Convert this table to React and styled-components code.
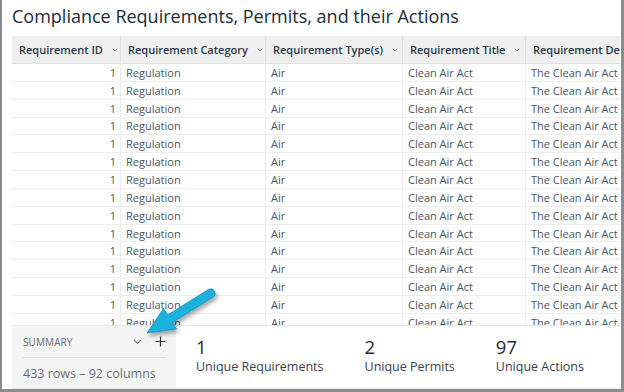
import React from 'react';
import styled, { createGlobalStyle } from 'styled-components';

const GlobalStyle = createGlobalStyle`
  html, body {
    margin: 0;
    padding: 0;
    background: #ffffff;
  }
  body {
    font-family: "Open Sans", "Noto Sans", sans-serif;
  }
`;

const Frame = styled.div`
  position: relative;
  width: 624px;
  height: 392px;
  box-sizing: border-box;
  border-left: 2px solid #8d8d8d;
  border-right: 3px solid #8d8d8d;
  border-bottom: 3px solid #8d8d8d;
  padding-left: 10px;
  padding-right: 1px;
  display: flex;
  flex-direction: column;
  overflow: hidden;
  background: #fff;
`;

const Title = styled.h1`
  margin: 0;
  height: 36px;
  display: flex;
  align-items: center;
  padding-bottom: 4px;
  box-sizing: border-box;
  font-size: 18px;
  font-weight: 400;
  color: #1d2b3a;
  white-space: nowrap;
`;

const TableArea = styled.div`
  flex: 1;
  overflow: hidden;
  min-height: 0;
`;

const cols = '109px 145px 137px 123px 220px';

const HeaderRow = styled.div`
  display: grid;
  grid-template-columns: ${cols};
  height: 28px;
  background: #efefef;
  border-bottom: 1px solid #e2e2e2;
  box-sizing: border-box;
`;

const HeaderCell = styled.div`
  display: flex;
  align-items: center;
  gap: 9px;
  padding-left: 7px;
  font-size: 11px;
  font-weight: 600;
  color: #2b3a4a;
  white-space: nowrap;
  border-right: 1px solid #e0e0e0;
  overflow: hidden;
`;

const Row = styled.div`
  display: grid;
  grid-template-columns: ${cols};
  height: 17.85px;
  box-sizing: border-box;
  border-bottom: 1px solid #ededed;
`;

const Cell = styled.div`
  display: flex;
  align-items: center;
  justify-content: ${p => (p.$num ? 'flex-end' : 'flex-start')};
  padding: ${p => (p.$num ? '0 4px 0 0' : '0 0 0 5px')};
  font-size: 11px;
  color: #4a5664;
  white-space: nowrap;
  overflow: hidden;
  border-right: 1px solid #ececec;
`;

const Summary = styled.div`
  height: 64px;
  display: flex;
  border-top: 1px solid #e6e6e6;
  border-bottom: 1px solid #e9e9e9;
  box-sizing: border-box;
  background: #fff;
`;

const SummaryLeft = styled.div`
  width: 164px;
  background: #f4f4f4;
  padding: 0 10px;
  box-sizing: border-box;
  display: flex;
  flex-direction: column;
`;

const SummaryHead = styled.div`
  height: 32px;
  display: flex;
  align-items: center;
  border-bottom: 1px solid #e2e2e2;
  box-sizing: border-box;
  font-size: 10px;
  color: #6a6f75;
  letter-spacing: 0.1px;
`;

const HeadLabel = styled.span`
  flex: 1;
  padding-left: 1px;
`;

const IconBtn = styled.span`
  display: flex;
  align-items: center;
  justify-content: center;
  margin-left: ${p => p.$ml || 0}px;
  color: ${p => p.$c || '#8a8f95'};
`;

const RowCount = styled.div`
  flex: 1;
  display: flex;
  align-items: center;
  padding-left: 1px;
  font-size: 12.5px;
  color: #6b7076;
  white-space: nowrap;
`;

const Stats = styled.div`
  flex: 1;
  display: flex;
  gap: 41px;
  padding-left: 20px;
`;

const Stat = styled.div`
  display: flex;
  flex-direction: column;
  padding-top: 9px;
`;

const StatValue = styled.div`
  font-size: 18.5px;
  line-height: 24px;
  color: #1f2a36;
`;

const StatLabel = styled.div`
  font-size: 12.5px;
  line-height: 16px;
  color: #38434f;
  white-space: nowrap;
`;

const Pointer = styled.svg`
  position: absolute;
  left: 130px;
  top: 285px;
  pointer-events: none;
  overflow: visible;
`;

const Chevron = ({ size = 6, color = '#8b9096' }) => (
  <svg width={size} height={size * 0.6} viewBox="0 0 10 6" fill="none">
    <path d="M1 1l4 4 4-4" stroke={color} strokeWidth="1.4" />
  </svg>
);

const headers = [
  'Requirement ID',
  'Requirement Category',
  'Requirement Type(s)',
  'Requirement Title',
  'Requirement Description',
];

const rows = Array.from({ length: 16 }, (_, i) => ({
  id: i,
  values: ['1', 'Regulation', 'Air', 'Clean Air Act', 'The Clean Air Act (CAA) is the comprehensive federal law'],
}));

const stats = [
  { value: '1', label: 'Unique Requirements' },
  { value: '2', label: 'Unique Permits' },
  { value: '97', label: 'Unique Actions' },
];

export default function App() {
  return (
    <>
      <GlobalStyle />
      <Frame>
        <Title>Compliance Requirements, Permits, and their Actions</Title>
        <TableArea>
          <HeaderRow>
            {headers.map(h => (
              <HeaderCell key={h}>
                {h}
                <Chevron />
              </HeaderCell>
            ))}
          </HeaderRow>
          {rows.map(r => (
            <Row key={r.id}>
              {r.values.map((v, j) => (
                <Cell key={j} $num={j === 0}>{v}</Cell>
              ))}
            </Row>
          ))}
        </TableArea>
        <Summary>
          <SummaryLeft>
            <SummaryHead>
              <HeadLabel>SUMMARY</HeadLabel>
              <IconBtn><Chevron size={9} color="#7d8288" /></IconBtn>
              <IconBtn $ml={13} $c="#333">
                <svg width="11" height="11" viewBox="0 0 11 11">
                  <path d="M5.5 0.5v10M0.5 5.5h10" stroke="#333" strokeWidth="1.2" />
                </svg>
              </IconBtn>
            </SummaryHead>
            <RowCount>433 rows – 92 columns</RowCount>
          </SummaryLeft>
          <Stats>
            {stats.map(s => (
              <Stat key={s.label}>
                <StatValue>{s.value}</StatValue>
                <StatLabel>{s.label}</StatLabel>
              </Stat>
            ))}
          </Stats>
        </Summary>
        {/* callout arrow pointing at the summary controls */}
        <Pointer width="90" height="60" viewBox="0 0 90 60">
          <defs>
            <filter id="sh" x="-30%" y="-30%" width="160%" height="160%">
              <feDropShadow dx="2" dy="3" stdDeviation="2" floodColor="#000" floodOpacity="0.35" />
            </filter>
          </defs>
          <g filter="url(#sh)">
            <path
              d="M15 48 L31.6 23.5 L35.6 29.9 L76.4 4.5 A4.5 4.5 0 0 1 81.2 12.1 L40.4 37.5 L44.4 43.9 Z"
              fill="#1bb0dc"
              stroke="#1592bf"
              strokeWidth="0.8"
              strokeLinejoin="round"
            />
          </g>
        </Pointer>
      </Frame>
    </>
  );
}
